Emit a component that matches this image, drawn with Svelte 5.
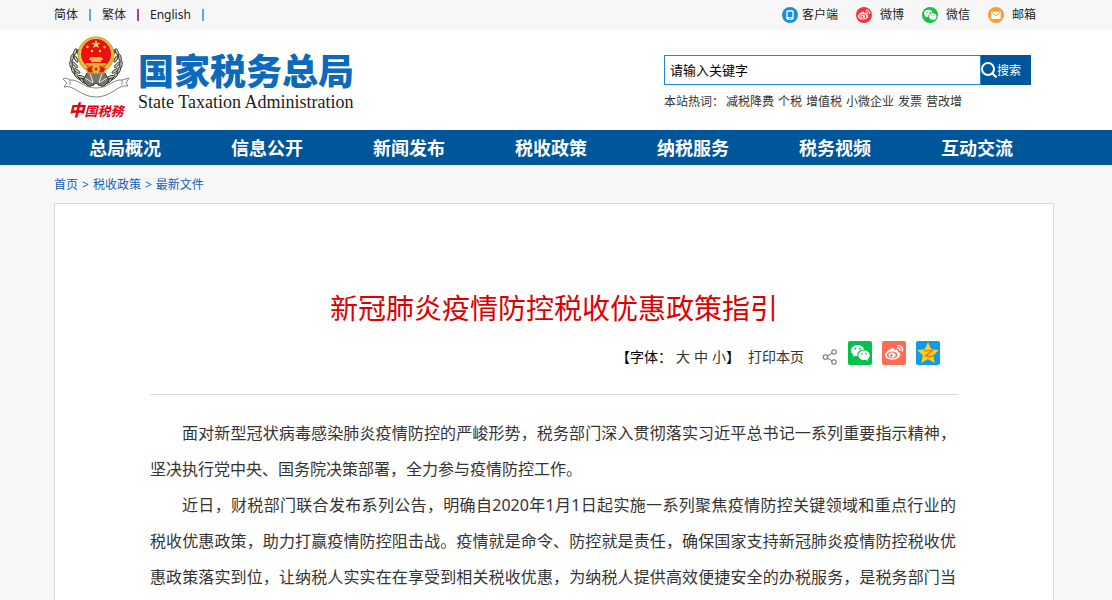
<script lang="ts">
	const languages = ['简体', '繁体', 'English'];
	const services = [
		{ name: '客户端', icon: 'client' },
		{ name: '微博', icon: 'weibo' },
		{ name: '微信', icon: 'wechat' },
		{ name: '邮箱', icon: 'mail' }
	];
	const hotWords = ['减税降费', '个税', '增值税', '小微企业', '发票', '营改增'];
	const menu = ['总局概况', '信息公开', '新闻发布', '税收政策', '纳税服务', '税务视频', '互动交流'];
	const crumbs = ['首页', '税收政策', '最新文件'];
	const sizes = [
		{ label: '大', name: 'large' },
		{ label: '中', name: 'medium' },
		{ label: '小', name: 'small' }
	];

	let keyword = $state('请输入关键字');
	let size = $state('medium');

	const handleSearch = (e: SubmitEvent): void => {
		e.preventDefault();
	};
</script>

{#snippet wechat()}
	<path
		fill="#fff"
		fill-rule="evenodd"
		d="M9.6 4C5.9 4 3 6.4 3 9.5c0 1.8 1 3.3 2.5 4.3L5 16l2.4-1.3c.7.2 1.4.3 2.1.3-.8-4 2.700-6.800 6.500-6.600C15.300 5.700 12.700 4 9.600 4ZM7.400 6.800a.9.9 0 1 1 0 1.800.9.9 0 0 1 0-1.800Zm4.600 0a.9.9 0 1 1 0 1.800.9.9 0 0 1 0-1.800Z"
	/>
	<path
		fill="#fff"
		fill-rule="evenodd"
		d="M16.100 9.400c-3.200 0-5.700 2.100-5.700 4.800s2.500 4.800 5.700 4.800c.6 0 1.200-.1 1.800-.3l2.100 1.200-.5-1.900c1.400-.9 2.300-2.300 2.300-3.800 0-2.700-2.500-4.800-5.700-4.800Zm-2 2.500a.8.8 0 1 1 0 1.600.8.8 0 0 1 0-1.600Zm4 0a.8.8 0 1 1 0 1.600.8.8 0 0 1 0-1.600Z"
	/>
{/snippet}

{#snippet weibo(color: string)}
	<path
		fill="#fff"
		d="M10 7.200c1.600-.7 2.700.1 2.200 2 2.400-.9 4.200-.5 3.700 1.600 1.500.5 2.400 1.400 2.400 2.800 0 2.700-3.600 5.200-8 5.200s-7.300-1.900-7.300-4.700C3 11.600 6.800 8.300 10 7.200Z"
	/>
	<ellipse cx="10.200" cy="14" rx="5.300" ry="3.600" fill={color} />
	<ellipse cx="10" cy="14.100" rx="3.500" ry="2.700" fill="#fff" />
	<circle cx="9.300" cy="14.600" r="1.300" fill={color} />
	<path
		fill="none"
		stroke="#fff"
		stroke-width="1.400"
		stroke-linecap="round"
		d="M15.400 4.700c3.600-.7 6 2.200 4.900 5.300M15.800 7.300c1.600-.2 2.500.8 2.100 2.100"
	/>
{/snippet}

{#snippet leaf(x: number, y: number, angle: number)}
	<ellipse
		cx={x}
		cy={y}
		rx="1.300"
		ry="3.600"
		fill="#c9c5b4"
		stroke="#292825"
		stroke-width=".8"
		transform="rotate({angle} {x} {y})"
	/>
{/snippet}

<div class="topbar">
	<div class="wrap topbar-inner">
		<div class="languages">
			{#each languages as language, i}
				<a href="#lang">{language}</a>
				<span class="bar" class:purple={i === 1}></span>
			{/each}
		</div>
		<div class="services">
			{#each services as service}
				<a href="#service">
					<svg viewBox="0 0 24 24" width="16" height="16" aria-hidden="true">
						{#if service.icon === 'client'}
							<circle cx="12" cy="12" r="12" fill="#1690dc" />
							<rect x="6.500" y="5" width="11" height="14" rx="2" fill="#fff" />
							<rect x="8.500" y="7" width="7" height="8" fill="#1690dc" />
							<rect x="10.500" y="16.300" width="3" height="1.200" fill="#1690dc" />
						{:else if service.icon === 'weibo'}
							<circle cx="12" cy="12" r="12" fill="#f5333d" />
							{@render weibo('#f5333d')}
						{:else if service.icon === 'wechat'}
							<circle cx="12" cy="12" r="12" fill="#12c33f" />
							{@render wechat()}
						{:else}
							<circle cx="12" cy="12" r="12" fill="#f9a12e" />
							<rect x="5" y="7" width="14" height="11" rx="1" fill="#fff" />
							<path d="m6 8.500 6 4.500 6-4.500" fill="none" stroke="#f9a12e" stroke-width="1.500" />
						{/if}
					</svg>
					{service.name}
				</a>
			{/each}
		</div>
	</div>
</div>

<header>
	<div class="wrap header-inner">
		<a class="logo" href="#home">
			<span class="seal">
				<svg viewBox="0 0 68 64" width="68" height="64" aria-hidden="true">
					<path
						d="M16 15C4 27 8 45 32 50M52 15c12 12 8 30-16 35"
						fill="none"
						stroke="#504e48"
						stroke-width="1.500"
					/>
					{#each [[13, 17, 25], [10, 23, 10], [9, 29, -5], [11, 35, -20], [15, 41, -38], [21, 46, -55]] as [x, y, angle]}
						{@render leaf(x, y, angle)}
						{@render leaf(x + 4, y + 1, angle - 38)}
						{@render leaf(68 - x, y, -angle)}
						{@render leaf(64 - x, y + 1, 38 - angle)}
					{/each}
					<path
						d="M25 38h18l4 8-6 6-7-4-7 4-6-6Z"
						fill="#77756e"
						stroke="#252522"
						stroke-width="1"
					/>
					<path d="m28 39 3 8m9-8-3 8M23 43l8 5m14-5-8 5" stroke="#eee" />
					<circle cx="34" cy="20" r="18" fill="#e5b936" stroke="#c99a2c" />
					<circle cx="34" cy="20" r="16" fill="none" stroke="#f7dc73" stroke-dasharray="2 2" />
					<circle cx="34" cy="19" r="15" fill="#ed1010" />
					<path
						d="m34 5 1.200 3h3.200l-2.600 2 1 3.100-2.800-1.900-2.800 1.900 1-3.100-2.600-2h3.200Z"
						fill="#ffe478"
					/>
					<g fill="#ffe068">
						<circle cx="25.500" cy="12" r="1.200" />
						<circle cx="42.500" cy="12" r="1.200" />
						<circle cx="30" cy="16" r="1.200" />
						<circle cx="38" cy="16" r="1.200" />
					</g>
					<path d="M29 22h10l2 2v1H27v-1Zm0 3h10v2H29Zm-5 3h20v2H24Z" fill="#f0b93a" />
					<path
						d="M24 33c4-4 16-4 20 0l-2 5H26Z"
						fill="#e21712"
						stroke="#d8a429"
						stroke-width="1.500"
					/>
					<circle cx="34" cy="34" r="4" fill="#e2b233" />
					<circle cx="34" cy="34" r="1.500" fill="#d91b12" />
					<path
						d="m1 44 3-1 4 2c8-1 14 8 26 8s18-9 26-8l7-2-3 5 2 3c-10-2-16 11-32 11S12 49 2 52l3-4Z"
						fill="#fdfdfb"
						stroke="#77756e"
						stroke-width=".9"
					/>
					<path d="M8 45v5m52-5v5" stroke="#77746d" stroke-width=".8" />
				</svg>
				<span class="motto"><b>中</b>国税務</span>
			</span>
			<span class="names">
				<strong>国家税务总局</strong>
				<span class="english">State Taxation Administration</span>
			</span>
		</a>
		<div class="search">
			<form onsubmit={handleSearch}>
				<input type="text" aria-label="请输入关键字" bind:value={keyword} />
				<button type="submit">
					<svg viewBox="0 0 16 16" width="16" height="16" aria-hidden="true">
						<circle cx="7" cy="7" r="6" fill="none" stroke="#fff" stroke-width="2" />
						<path d="m11.500 11.500 4 4" stroke="#fff" stroke-width="2" />
					</svg>
					搜索
				</button>
			</form>
			<p class="hot">
				<span>本站热词：</span>
				{#each hotWords as word}
					<a href="#hot">{word}</a>
				{/each}
			</p>
		</div>
	</div>
</header>

<nav class="menu">
	<div class="wrap menu-inner">
		{#each menu as item}
			<a href="#menu">{item}</a>
		{/each}
	</div>
</nav>

<main class="wrap">
	<div class="crumbs">
		{#each crumbs as crumb, i}
			{#if i > 0}<span>&gt;</span>{/if}
			<a href="#crumb">{crumb}</a>
		{/each}
	</div>

	<article>
		<h1>新冠肺炎疫情防控税收优惠政策指引</h1>
		<div class="tools">
			<div class="sizes">
				<span>【字体：</span>
				{#each sizes as option}
					<button onclick={() => (size = option.name)}>{option.label}</button>
				{/each}
				<span class="close">】</span>
			</div>
			<button class="print" onclick={() => window.print()}>打印本页</button>
			<div class="share">
				<svg class="nodes" viewBox="0 0 16 16" width="16" height="16" aria-hidden="true">
					<g fill="none" stroke="#777" stroke-width="1.100">
						<circle cx="3.500" cy="8" r="2.300" />
						<circle cx="12" cy="3" r="2.200" />
						<circle cx="12" cy="13" r="2.200" />
						<path d="m5.500 6.900 4.600-2.800M5.500 9.100l4.600 2.800" />
					</g>
				</svg>
				<a href="#wechat" aria-label="微信">
					<svg viewBox="0 0 24 24" width="24" height="24">
						<rect width="24" height="24" rx="2" fill="#07c04c" />
						{@render wechat()}
					</svg>
				</a>
				<a href="#weibo" aria-label="微博">
					<svg viewBox="0 0 24 24" width="24" height="24">
						<rect width="24" height="24" rx="2" fill="#ff6b57" />
						{@render weibo('#ff6b57')}
					</svg>
				</a>
				<a href="#qzone" aria-label="QQ空间">
					<svg viewBox="0 0 24 24" width="24" height="24">
						<rect width="24" height="24" rx="2" fill="#0d9bea" />
						<path
							d="m12 1.500 3.100 6.900 7.400.9-5.500 5 1.500 7.400-6.500-3.700-6.500 3.700L7 14.300l-5.500-5 7.400-.9Z"
							fill="#ffd51c"
							stroke="#f3b51a"
							stroke-width=".6"
						/>
						<path
							d="M8 10c3-.7 5.500-.6 8-.2l-6.500 5c2.500.8 5 .8 8 0"
							fill="none"
							stroke="#f07b16"
							stroke-width="1.600"
						/>
					</svg>
				</a>
			</div>
		</div>
		<div class="content {size}">
			<p>
				面对新型冠状病毒感染肺炎疫情防控的严峻形势，税务部门深入贯彻落实习近平总书记一系列重要指示精神，坚决执行党中央、国务院决策部署，全力参与疫情防控工作。
			</p>
			<p class="full">
				近日，财税部门联合发布系列公告，明确自2020年1月1日起实施一系列聚焦疫情防控关键领域和重点行业的税收优惠政策，助力打赢疫情防控阻击战。疫情就是命令、防控就是责任，确保国家支持新冠肺炎疫情防控税收优惠政策落实到位，让纳税人实实在在享受到相关税收优惠，为纳税人提供高效便捷安全的办税服务，是税务部门当
			</p>
		</div>
	</article>
</main>

<style>
	:global(body) {
		background: #f8f7f7;
		color: #333;
		font-family: 'Noto Sans', 'Noto Sans CJK SC', sans-serif;
		font-size: 12px;
	}

	:global(#app) {
		display: flex;
		flex-direction: column;
		min-height: 100vh;
	}

	a {
		color: inherit;
		text-decoration: none;
	}

	button,
	input {
		box-sizing: border-box;
		margin: 0;
		padding: 0;
		border: none;
		background: none;
		color: inherit;
		font: inherit;
	}

	button {
		cursor: pointer;
	}

	svg {
		display: block;
		flex: none;
	}

	.wrap {
		width: 100%;
		max-width: 1004px;
		box-sizing: border-box;
		margin: 0 auto;
		padding-right: 4px;
	}

	.topbar {
		color: #222;
		line-height: 30px;
	}

	.topbar-inner,
	.languages,
	.services,
	.services a {
		display: flex;
		align-items: center;
	}

	.topbar-inner {
		justify-content: space-between;
	}

	.languages {
		gap: 11px;
	}

	.bar {
		width: 2px;
		height: 12px;
		background: #5ba8dc;
	}

	.bar.purple {
		background: #a0439a;
	}

	.services {
		gap: 18px;
		padding-right: 18px;
	}

	.services a {
		gap: 8px;
	}

	.services a:first-child {
		gap: 4px;
	}

	header {
		background: #fff;
	}

	.header-inner {
		display: flex;
		justify-content: space-between;
		height: 100px;
	}

	.logo {
		display: flex;
		gap: 8px;
		padding: 5px 0 0 8px;
	}

	.seal {
		display: flex;
		flex-direction: column;
		align-items: center;
	}

	.motto {
		color: #e60012;
		font-size: 13px;
		font-style: italic;
		font-weight: 700;
		line-height: 22px;
	}

	.motto b {
		font-size: 16px;
	}

	.names {
		display: flex;
		flex-direction: column;
		padding-top: 17px;
	}

	.names strong {
		color: #0c6abb;
		font-size: 36px;
		font-weight: 900;
		line-height: 40px;
	}

	.english {
		color: #222;
		font-family: 'Liberation Serif', serif;
		font-size: 18px;
		line-height: 20px;
	}

	.search {
		width: 367px;
		padding: 25px 23px 0 0;
	}

	.search form {
		display: flex;
		height: 30px;
	}

	.search input {
		flex: 1;
		min-width: 0;
		padding: 0 5px 2px;
		border: 1px solid #1a8ad6;
		background: #fff;
		color: #000;
		font-size: 13px;
	}

	.search button {
		display: flex;
		align-items: center;
		width: 50px;
		background: #00569a;
		color: #fff;
	}

	.hot {
		display: flex;
		gap: 4px;
		margin: 7px 0 0;
		line-height: 20px;
	}

	.hot span {
		margin-right: -2px;
	}

	.menu {
		background: #00569a;
		color: #fff;
		font-size: 18px;
		font-weight: 700;
		line-height: 37px;
	}

	.menu-inner {
		display: flex;
		height: 35px;
		padding-right: 10px;
	}

	.menu-inner a {
		flex: 1;
		text-align: center;
	}

	main {
		display: flex;
		flex: 1;
		flex-direction: column;
	}

	.crumbs {
		display: flex;
		gap: 4px;
		padding-top: 2px;
		color: #0f62b5;
		line-height: 36px;
	}

	article {
		flex: 1;
		padding: 84px 95px 0;
		border: 1px solid #dedad4;
		border-bottom: none;
		background: #fff;
	}

	h1 {
		margin: 0;
		color: #dd0000;
		font-size: 28px;
		font-weight: 400;
		line-height: 40px;
		text-align: center;
	}

	.tools {
		display: flex;
		align-items: flex-start;
		justify-content: flex-end;
		padding: 13px 18px 25px 0;
		border-bottom: 1px solid #dedad4;
		font-size: 14px;
		line-height: 24px;
	}

	.sizes {
		display: flex;
		gap: 4px;
		padding-top: 4px;
		color: #000;
	}

	.sizes button {
		color: #333;
	}

	.sizes .close {
		margin-left: -4px;
	}

	.print {
		margin-left: 8px;
		padding-top: 4px;
	}

	.share {
		display: flex;
		align-items: flex-end;
		gap: 10px;
		margin-left: 18px;
	}

	.content {
		padding: 20px 2px 0 0;
		font-size: 16px;
		line-height: 36px;
		text-align: justify;
	}

	.content.large {
		font-size: 18px;
	}

	.content.small {
		font-size: 14px;
	}

	.content p {
		margin: 0;
		text-indent: 2em;
	}

	.content .full {
		text-align-last: justify;
	}
</style>
